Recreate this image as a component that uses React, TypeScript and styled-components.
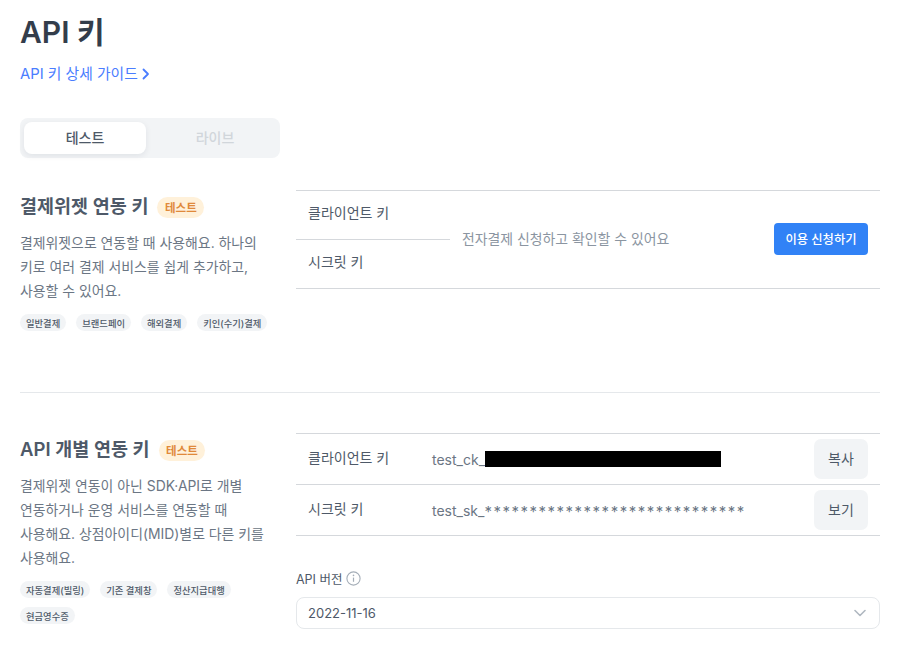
import styled, {createGlobalStyle} from 'styled-components'

const GlobalStyle = createGlobalStyle`
  * {
    box-sizing: border-box;
  }
  html,
  body {
    margin: 0;
    background: #fff;
    font-family: Inter, 'Noto Sans CJK KR', sans-serif;
    color: #333d4b;
  }
`

const Page = styled.main`
  width: 904px;
  height: 651px;
  padding: 12px 24px 0 20px;
  overflow: hidden;
`

const Title = styled.h1`
  margin: 0;
  height: 40px;
  font-size: 30px;
  line-height: 40px;
  font-weight: 600;
  color: #333d4b;
`

const GuideLink = styled.a`
  display: flex;
  align-items: center;
  gap: 4px;
  margin-top: 11px;
  height: 22px;
  font-size: 14.8px;
  line-height: 22px;
  color: #4a7dff;
`

const Segment = styled.div`
  display: grid;
  grid-template-columns: 122px 1fr;
  width: 260px;
  height: 40px;
  margin-top: 33px;
  padding: 4px;
  border-radius: 8px;
  background: #f2f4f6;
`

const SegmentItem = styled.div<{$active?: boolean}>`
  display: flex;
  align-items: center;
  justify-content: center;
  padding-left: ${(p) => (p.$active ? 0 : 8)}px;
  padding-bottom: 2px;
  border-radius: 8px;
  font-size: 14px;
  font-weight: 500;
  color: ${(p) => (p.$active ? '#4e5968' : '#d1d6db')};
  background: ${(p) => (p.$active ? '#fff' : 'transparent')};
  box-shadow: ${(p) => (p.$active ? '0 2px 6px rgba(0, 27, 55, 0.08)' : 'none')};
`

const Section = styled.section<{$top: number; $height: number}>`
  display: grid;
  grid-template-columns: 276px 584px;
  margin-top: ${(p) => p.$top}px;
  min-height: ${(p) => p.$height}px;
`

const Info = styled.div``

const Heading = styled.div`
  display: flex;
  align-items: center;
  gap: 9px;
  height: 30px;
`

const HeadingText = styled.h2`
  margin: 0;
  font-size: 18.5px;
  font-weight: 600;
  color: #4e5968;
  white-space: nowrap;
`

const TestBadge = styled.span`
  display: inline-flex;
  align-items: center;
  height: 21px;
  margin-top: 4px;
  padding: 0 7.5px;
  border-radius: 11px;
  background: #fff1da;
  font-size: 11.5px;
  font-weight: 600;
  color: #e0893a;
`

const Description = styled.p`
  margin: 11px 0 0;
  width: 256px;
  font-size: 13.9px;
  line-height: 24px;
  color: #6b7684;
  word-break: keep-all;
`

const Tags = styled.div`
  display: flex;
  flex-wrap: wrap;
  gap: 9px 10px;
  margin-top: 11px;
  width: 256px;
`

const Tag = styled.span`
  display: inline-flex;
  align-items: center;
  height: 17px;
  padding: 0 6px;
  border-radius: 9px;
  background: #f2f4f6;
  font-size: 9.3px;
  font-weight: 500;
  color: #4e5968;
  white-space: nowrap;
`

const KeyTable = styled.div`
  border-top: 1px solid #d5d8dc;
  border-bottom: 1px solid #d5d8dc;
`

const EmptyTable = styled(KeyTable)`
  display: grid;
  grid-template-columns: 154px 1fr auto;
  align-items: center;
  height: 99px;
  padding-right: 12px;
`

const EmptyLabels = styled.div`
  display: grid;
  grid-template-rows: 48px 49px;
  align-self: start;
`

const EmptyLabel = styled.div<{$divided?: boolean}>`
  display: flex;
  align-items: center;
  padding-left: 12px;
  padding-bottom: 6px;
  font-size: 14px;
  color: #4e5968;
  border-top: ${(p) => (p.$divided ? '1px solid #d5d8dc' : 'none')};
`

const EmptyMessage = styled.span`
  padding-left: 12px;
  padding-bottom: 3px;
  font-size: 13.9px;
  color: #8b95a1;
`

const ApplyButton = styled.button`
  width: 94px;
  height: 32px;
  margin-bottom: 2px;
  border: 0;
  border-radius: 4px;
  background: #3182f6;
  font: inherit;
  font-size: 12.3px;
  font-weight: 500;
  color: #fff;
`

const KeyRow = styled.div<{$divided?: boolean}>`
  display: grid;
  grid-template-columns: 124px 1fr 54px;
  align-items: center;
  height: ${(p) => (p.$divided ? 51 : 50)}px;
  padding: 0 12px;
  border-top: ${(p) => (p.$divided ? '1px solid #d5d8dc' : 'none')};
`

const KeyLabel = styled.span`
  padding-bottom: 4px;
  font-size: 14px;
  color: #4e5968;
`

const KeyValue = styled.span`
  display: flex;
  align-items: center;
  font-size: 14px;
  color: #6b7684;
`

const Masked = styled.span`
  padding-top: 3px;
  font-size: 15px;
  letter-spacing: 1.5px;
`

const Redacted = styled.span`
  display: inline-block;
  width: 236px;
  height: 16px;
  background: #000;
`

const SmallButton = styled.button`
  width: 54px;
  height: 40px;
  padding: 0 0 2px;
  border: 0;
  border-radius: 7px;
  background: #f2f4f6;
  font: inherit;
  font-size: 14px;
  color: #4e5968;
`

const VersionLabel = styled.div`
  display: flex;
  align-items: center;
  gap: 4px;
  margin-top: 32px;
  height: 20px;
  font-size: 12.5px;
  color: #4e5968;
`

const VersionSelect = styled.div`
  display: flex;
  align-items: center;
  justify-content: space-between;
  height: 32px;
  margin-top: 9px;
  padding: 0 13px 0 11px;
  border: 1px solid #e5e8eb;
  border-radius: 8px;
  font-size: 13px;
  color: #4e5968;
`

const Rule = styled.hr`
  margin: 0;
  border: 0;
  border-top: 1px solid #e5e8eb;
`

function Chevron() {
  return (
    <svg width="8" height="12" viewBox="0 0 8 12" fill="none">
      <path d="M1.5 1.5 6 6l-4.5 4.5" stroke="#4a7dff" strokeWidth="1.8" strokeLinecap="round" strokeLinejoin="round" />
    </svg>
  )
}

function InfoIcon() {
  return (
    <svg width="15" height="15" viewBox="0 0 15 15" fill="none">
      <circle cx="7.5" cy="7.5" r="6.6" stroke="#a5aeb8" strokeWidth="1.1" />
      <path d="M7.5 6.6v4.2" stroke="#a5aeb8" strokeWidth="1.2" />
      <circle cx="7.5" cy="4.4" r="0.8" fill="#a5aeb8" />
    </svg>
  )
}

function SelectArrow() {
  return (
    <svg width="12" height="8" viewBox="0 0 12 8" fill="none">
      <path d="M1 1.5 6 6.5l5-5" stroke="#b0b8c1" strokeWidth="1.6" strokeLinecap="round" strokeLinejoin="round" />
    </svg>
  )
}

export default function App() {
  return (
    <Page>
      <GlobalStyle />
      <Title>API 키</Title>
      <GuideLink>
        API 키 상세 가이드 <Chevron />
      </GuideLink>

      <Segment>
        <SegmentItem $active>테스트</SegmentItem>
        <SegmentItem>라이브</SegmentItem>
      </Segment>

      <Section $top={32} $height={202}>
        <Info>
          <Heading>
            <HeadingText>결제위젯 연동 키</HeadingText>
            <TestBadge>테스트</TestBadge>
          </Heading>
          <Description>
            결제위젯으로 연동할 때 사용해요. 하나의 키로 여러 결제 서비스를 쉽게 추가하고, 사용할 수 있어요.
          </Description>
          <Tags>
            <Tag>일반결제</Tag>
            <Tag>브랜드페이</Tag>
            <Tag>해외결제</Tag>
            <Tag>키인(수기)결제</Tag>
          </Tags>
        </Info>
        <div>
          <EmptyTable>
            <EmptyLabels>
              <EmptyLabel>클라이언트 키</EmptyLabel>
              <EmptyLabel $divided>시크릿 키</EmptyLabel>
            </EmptyLabels>
            <EmptyMessage>전자결제 신청하고 확인할 수 있어요</EmptyMessage>
            <ApplyButton>이용 신청하기</ApplyButton>
          </EmptyTable>
        </div>
      </Section>

      <Rule />

      <Section $top={40} $height={210}>
        <Info>
          <Heading>
            <HeadingText>API 개별 연동 키</HeadingText>
            <TestBadge>테스트</TestBadge>
          </Heading>
          <Description>
            결제위젯 연동이 아닌 SDK·API로 개별 연동하거나 운영 서비스를 연동할 때 사용해요. 상점아이디(MID)별로 다른 키를 사용해요.
          </Description>
          <Tags>
            <Tag>자동결제(빌링)</Tag>
            <Tag>기존 결제창</Tag>
            <Tag>정산지급대행</Tag>
            <Tag>현금영수증</Tag>
          </Tags>
        </Info>
        <div>
          <KeyTable>
            <KeyRow>
              <KeyLabel>클라이언트 키</KeyLabel>
              <KeyValue>
                test_ck_
                <Redacted />
              </KeyValue>
              <SmallButton>복사</SmallButton>
            </KeyRow>
            <KeyRow $divided>
              <KeyLabel>시크릿 키</KeyLabel>
              <KeyValue>
                test_sk_<Masked>*****************************</Masked>
              </KeyValue>
              <SmallButton>보기</SmallButton>
            </KeyRow>
          </KeyTable>
          <VersionLabel>
            API 버전 <InfoIcon />
          </VersionLabel>
          <VersionSelect>
            2022-11-16
            <SelectArrow />
          </VersionSelect>
        </div>
      </Section>
    </Page>
  )
}
